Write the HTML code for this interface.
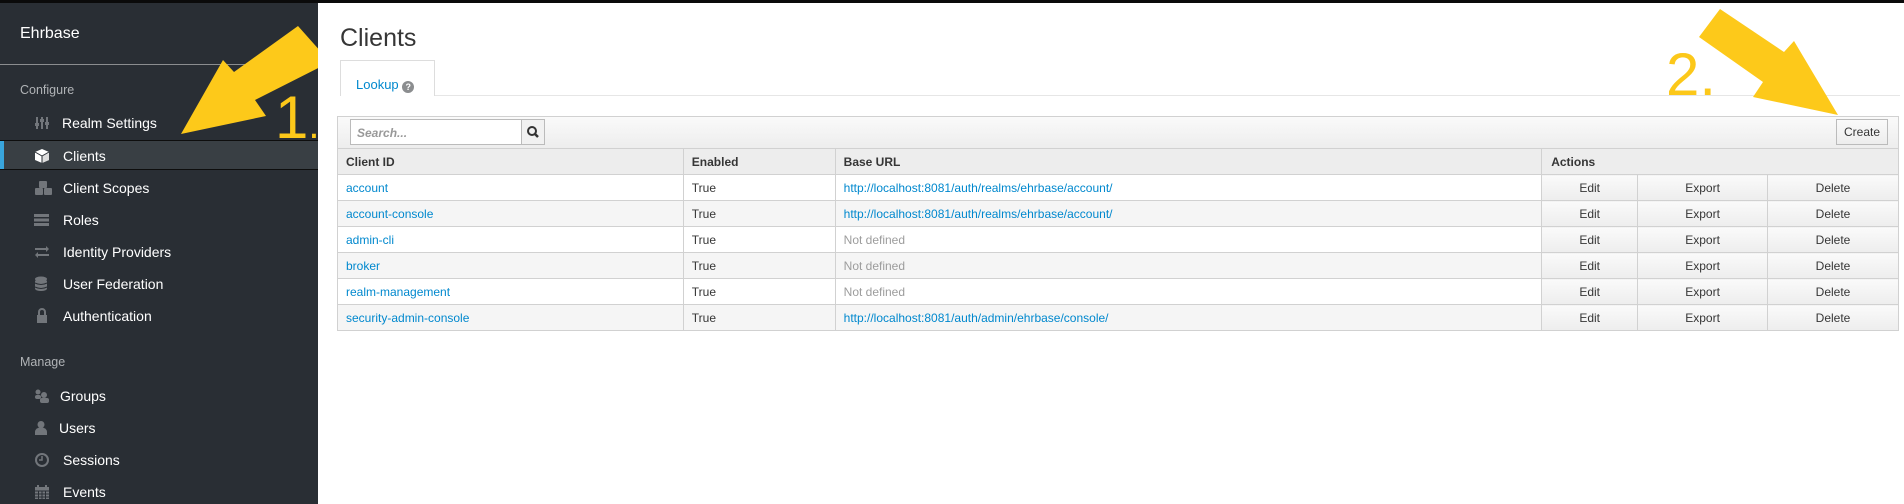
<!DOCTYPE html>
<html><head><meta charset="utf-8"><style>
*{box-sizing:border-box;margin:0;padding:0}
body{width:1904px;height:504px;overflow:hidden;background:#fff;font-family:"Liberation Sans",sans-serif;position:relative}
.top{position:absolute;left:0;top:0;width:1904px;height:3px;background:#0a0a0a}
.side{position:absolute;left:0;top:3px;width:318px;height:501px;background:#292e34;color:#fff;overflow:hidden}
.brand{position:absolute;left:20px;top:22px;font-size:16px;color:#fff}
.sep{position:absolute;left:0;top:61px;width:318px;height:1px;background:#8b8d8f}
.sec{position:absolute;left:20px;font-size:12.5px;color:#b0b3b6}
.item{position:absolute;left:0;width:318px;height:30px;font-size:14px;color:#fff;line-height:30px}
.item svg{position:absolute;left:34px;top:7px}
.item span{position:absolute;left:63px}
.act{background:#393f44;border-top:1px solid #0e0e0e;border-bottom:1px solid #0e0e0e}
.act:before{content:"";position:absolute;left:0;top:0;width:4px;height:100%;background:#39a5dc}
h1{position:absolute;left:340px;top:24px;font-weight:300;font-size:25px;color:#363636}
.tab{position:absolute;left:340px;top:60px;width:95px;height:36px;border:1px solid #ddd;border-bottom:none;background:#fff;font-size:13px;color:#0088ce;padding:16px 0 0 15px}
.tabline{position:absolute;left:340px;top:95px;width:1560px;height:1px;background:#e6e6e6}
.q{display:inline-block;width:12px;height:12px;border-radius:6px;background:#8b8d8f;color:#fff;font-size:9px;text-align:center;line-height:12px;font-weight:bold;vertical-align:-1px}
.tb{position:absolute;left:337px;top:116px;width:1562px;height:33px;background:linear-gradient(#fafafa,#ededed);border:1px solid #d1d1d1}
.search{position:absolute;left:350px;top:119px;width:172px;height:26px;border:1px solid #bbb;background:#fff;font-size:12px;font-style:italic;color:#999;padding:6px 0 0 6px;font-weight:bold}
.sbtn{position:absolute;left:521px;top:119px;width:24px;height:26px;border:1px solid #bbb;background:#f1f1f1}
.create{position:absolute;left:1836px;top:119px;width:52px;height:26px;border:1px solid #bbb;background:linear-gradient(#fafafa,#ededed);font-size:12px;color:#363636;text-align:center;line-height:24px}
table{position:absolute;left:337px;top:148px;width:1562px;border-collapse:collapse;font-size:12px;color:#363636}
td,th{border:1px solid #d1d1d1;height:26px;padding:0 8px;text-align:left;white-space:nowrap}
th{background:#ededed;font-weight:bold}
tr:nth-child(odd) td{background:#f5f5f5}
tr:nth-child(even) td{background:#fff}
td a{color:#0088ce;text-decoration:none}
.nd{color:#9c9c9c}
td.b{text-align:center;background:linear-gradient(#fafafa,#ededed)!important}
.num{position:absolute;font-size:60px;color:#fcc81a;font-weight:300;line-height:1}
</style></head><body>
<div class="top"></div>
<div class="side">
<div class="brand">Ehrbase</div>
<div class="sep"></div>
<div class="sec" style="top:80px">Configure</div>
<div class="item" style="top:105px"><svg width="16" height="16"><g stroke="#72767b" stroke-width="2"><line x1="3" y1="2" x2="3" y2="14"/><line x1="8" y1="2" x2="8" y2="14"/><line x1="13" y1="2" x2="13" y2="14"/></g><g fill="#72767b"><rect x="1" y="8" width="4" height="3"/><rect x="6" y="4" width="4" height="3"/><rect x="11" y="7" width="4" height="3"/></g></svg><span style="left:62px">Realm Settings</span></div>
<div class="item act" style="top:137px"><svg width="16" height="16"><polygon points="8,1 15,4 15,12 8,15 1,12 1,4" fill="#fff"/><polygon points="8,8 15,4 15,12 8,15" fill="#ddd"/><line x1="8" y1="8" x2="8" y2="15" stroke="#292e34"/><line x1="1" y1="4" x2="8" y2="8" stroke="#292e34"/><line x1="15" y1="4" x2="8" y2="8" stroke="#292e34"/></svg><span>Clients</span></div>
<div class="item" style="top:170px"><svg width="20" height="18"><g fill="#72767b"><rect x="5" y="1" width="8" height="7" rx="1"/><rect x="1" y="8" width="8" height="7" rx="1"/><rect x="10" y="8" width="8" height="7" rx="1"/></g></svg><span>Client Scopes</span></div>
<div class="item" style="top:202px"><svg width="16" height="16"><g fill="#72767b"><rect x="0" y="2" width="15" height="3"/><rect x="0" y="6.5" width="15" height="3"/><rect x="0" y="11" width="15" height="3"/></g></svg><span>Roles</span></div>
<div class="item" style="top:234px"><svg width="16" height="16"><g fill="#72767b"><rect x="1" y="4" width="12" height="2"/><polygon points="12,2 15,5 12,8"/><rect x="3" y="10" width="12" height="2"/><polygon points="4,8 1,11 4,14"/></g></svg><span>Identity Providers</span></div>
<div class="item" style="top:266px"><svg width="16" height="17"><g fill="#72767b"><ellipse cx="7" cy="3" rx="6" ry="2.5"/><rect x="1" y="3" width="12" height="12" rx="5" ry="2.5"/></g><g stroke="#292e34"><path d="M1 7 Q7 10 13 7 M1 11 Q7 14 13 11" fill="none"/></g></svg><span>User Federation</span></div>
<div class="item" style="top:298px"><svg width="16" height="16"><path d="M5 7 V4 a3 3 0 0 1 6 0 V7" stroke="#72767b" stroke-width="2" fill="none"/><rect x="3" y="7" width="10" height="8" fill="#72767b"/></svg><span>Authentication</span></div>
<div class="sec" style="top:352px">Manage</div>
<div class="item" style="top:378px"><svg width="16" height="16"><g fill="#72767b"><circle cx="4" cy="4" r="2.5"/><rect x="1" y="7" width="6" height="4" rx="2"/><circle cx="10" cy="7" r="3"/><rect x="6" y="10" width="9" height="5" rx="2"/></g></svg><span style="left:60px">Groups</span></div>
<div class="item" style="top:410px"><svg width="16" height="16"><g fill="#72767b"><circle cx="7" cy="4.5" r="3.5"/><path d="M1 15 V12 a5 4 0 0 1 12 0 V15 Z"/></g></svg><span style="left:59px">Users</span></div>
<div class="item" style="top:442px"><svg width="16" height="16"><circle cx="8" cy="8" r="6" stroke="#72767b" stroke-width="2" fill="none"/><path d="M8 4 V8 H5" stroke="#72767b" stroke-width="1.5" fill="none"/></svg><span>Sessions</span></div>
<div class="item" style="top:474px"><svg width="16" height="16"><g fill="#72767b"><rect x="1" y="3" width="14" height="12"/></g><g stroke="#292e34"><path d="M1 7 H15 M1 10 H15 M1 13 H15 M4.5 7 V15 M8 7 V15 M11.5 7 V15"/></g><g stroke="#72767b" stroke-width="2"><path d="M4 1 V4 M12 1 V4"/></g></svg><span>Events</span></div>
<svg width="318" height="200" style="position:absolute;left:0;top:-3px">
<polygon fill="#fdc91a" points="181,134 223,60 234,72 298,26 330,62 255,100 266,116"/>
</svg>
</div>
<h1>Clients</h1>
<div class="tabline"></div>
<div class="tab">Lookup <span class="q">?</span></div>
<div class="tb"></div>
<div class="search">Search...</div>
<div class="sbtn"><svg width="22" height="24"><circle cx="10" cy="11" r="4" stroke="#333" stroke-width="2" fill="none"/><line x1="13" y1="14" x2="16" y2="17" stroke="#333" stroke-width="2.5"/></svg></div>
<div class="create">Create</div>
<table>
<colgroup><col style="width:346px"><col style="width:152px"><col style="width:707px"><col style="width:96px"><col style="width:130px"><col style="width:131px"></colgroup>
<tr><th>Client ID</th><th>Enabled</th><th>Base URL</th><th colspan="3" style="padding-left:9px">Actions</th></tr>
<tr><td><a>account</a></td><td>True</td><td><a>http://localhost:8081/auth/realms/ehrbase/account/</a></td><td class="b">Edit</td><td class="b">Export</td><td class="b">Delete</td></tr>
<tr><td><a>account-console</a></td><td>True</td><td><a>http://localhost:8081/auth/realms/ehrbase/account/</a></td><td class="b">Edit</td><td class="b">Export</td><td class="b">Delete</td></tr>
<tr><td><a>admin-cli</a></td><td>True</td><td class="nd">Not defined</td><td class="b">Edit</td><td class="b">Export</td><td class="b">Delete</td></tr>
<tr><td><a>broker</a></td><td>True</td><td class="nd">Not defined</td><td class="b">Edit</td><td class="b">Export</td><td class="b">Delete</td></tr>
<tr><td><a>realm-management</a></td><td>True</td><td class="nd">Not defined</td><td class="b">Edit</td><td class="b">Export</td><td class="b">Delete</td></tr>
<tr><td><a>security-admin-console</a></td><td>True</td><td><a>http://localhost:8081/auth/admin/ehrbase/console/</a></td><td class="b">Edit</td><td class="b">Export</td><td class="b">Delete</td></tr>
</table>
<svg width="1904" height="504" style="position:absolute;left:0;top:0">
<polygon fill="#fdc91a" points="1838,115 1794,41 1784,52 1720,9 1699,37 1763,82 1753,97"/>
</svg>
<div class="num" style="left:275px;top:88px">1<span style="font-size:40px">.</span></div>
<div class="num" style="left:1666px;top:45px">2.</div>
</body></html>
